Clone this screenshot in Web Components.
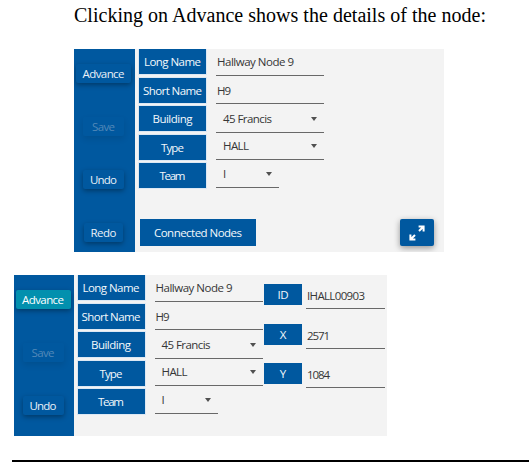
<!DOCTYPE html>
<html lang="en">
<head>
<meta charset="utf-8">
<title>Node details</title>
<style>
html,body{margin:0;background:#fff}
body{width:529px;height:467px;overflow:hidden}
</style>
</head>
<body>
<doc-page></doc-page>
<script>
const define = (name, html, setup) => {
  const t = document.createElement('template');
  t.innerHTML = html;
  customElements.define(name, class extends HTMLElement {
    connectedCallback() {
      if (this.shadowRoot) return;
      this.attachShadow({mode: 'open'}).append(t.content.cloneNode(true));
      if (setup) setup(this, this.shadowRoot);
    }
  });
};

// Text tracked out or in to a given width.
define('fit-text', `<style>:host{display:inline-block;white-space:nowrap}span{display:inline-block}</style><span><slot></slot></span>`, (el, root) => {
  const w = +el.getAttribute('w');
  const s = root.querySelector('span');
  const n = el.textContent.length;
  if (w && n > 1) {
    const ls = (w - s.getBoundingClientRect().width) / (n - 1);
    s.style.letterSpacing = ls + 'px';
    s.style.marginRight = -ls + 'px';
  }
});

define('side-button', `<style>
:host{display:flex;align-items:center;justify-content:center;box-sizing:border-box;width:var(--w,41px);height:19px;border-radius:2px;background:#00589f;color:#e9f1f8;box-shadow:0 2px 5px rgba(0,0,0,.34)}
:host([active]){background:#0290ae;color:#fff}
:host([off]){background:none;color:#5288b8;box-shadow:0 3px 6px rgba(0,0,0,.1)}
</style><slot></slot>`);

define('field-label', `<style>
:host{display:flex;align-items:center;justify-content:center;box-sizing:border-box;background:#00589f;color:#f4f8fc;box-shadow:0 0 0 1px #dce8f4}
</style><slot></slot>`);

define('line-field', `<style>
:host{display:flex;align-items:center;justify-content:space-between;box-sizing:border-box;border-bottom:1px solid #686868;padding:0 7px var(--up,1px) var(--in,1px);color:#363636}
i{display:none;width:0;height:0;border:3.5px solid transparent;border-top:4px solid #505050;border-bottom:0}
:host([menu]) i{display:block}
</style><slot></slot><i></i>`);

define('side-bar', `<style>
:host{display:flex;flex-direction:column;align-items:center;box-sizing:border-box;background:#00589f;padding:15px 3px 0 1px;gap:34px}
</style><slot></slot>`);

define('node-form', `<style>
:host{display:grid;grid-template-columns:67px 108px;column-gap:10px;align-content:start}
field-label{height:25px;margin-bottom:3.5px}
line-field{height:var(--h,27px)}
</style>
<field-label><fit-text w="57">Long Name</fit-text></field-label><line-field><fit-text w="77">Hallway Node 9</fit-text></line-field>
<field-label><fit-text w="59">Short Name</fit-text></field-label><line-field style="--h:26.4px;--up:0px"><fit-text w="14">H9</fit-text></line-field>
<field-label><fit-text w="40">Building</fit-text></field-label><line-field menu style="--in:7px"><fit-text w="49">45 Francis</fit-text></line-field>
<field-label><fit-text w="23">Type</fit-text></field-label><line-field menu style="--in:7px;--h:25.4px;--up:2.4px"><fit-text w="26">HALL</fit-text></line-field>
<field-label><fit-text w="26">Team</fit-text></field-label><line-field menu style="--in:7px;--h:25px;--up:3px;width:63px"><fit-text>I</fit-text></line-field>`);

define('expand-button', `<style>
:host{display:flex;align-items:center;justify-content:center;width:34px;height:27px;background:#00589f;border-radius:2px;box-shadow:0 2px 6px rgba(0,0,0,.4)}
svg{display:block}
</style><svg width="16" height="16" viewBox="0 0 16 16" fill="none" stroke="#fff" stroke-width="2"><path d="M9.6 1.4H14.6V6.4M14.3 1.7L10 6M1.4 9.6V14.6H6.4M1.7 14.3L6 10"/></svg>`);

define('coord-row', `<style>
:host{display:grid;grid-template-columns:38px 79px;column-gap:4px;height:39.5px;align-items:start}
field-label{height:21px;box-shadow:none}
line-field{height:25px;--up:1px}
</style><field-label><slot name="key"></slot></field-label><line-field><slot></slot></line-field>`);

define('doc-page', `<style>
:host{display:flex;flex-direction:column;width:529px;height:467px;font:11.5px/15px "Open Sans","Noto Sans",sans-serif}
h1{margin:0 0 0 74px;padding-top:3px;height:46px;box-sizing:content-box;font:400 20px/25px "Liberation Serif",serif;color:#000}
section{display:flex;background:#f3f3f3;overflow:hidden}
.one{width:370px;height:203px;margin-left:74px;flex:none}
.two{width:373px;height:161px;margin:23px 0 0 14px;flex:none}
.one side-bar{width:61px}
.two side-bar{width:60px}
.main{display:flex;flex-direction:column;flex:1;padding-left:4px}
.main node-form{height:170px}
.actions{display:flex;justify-content:space-between;padding-right:10px;padding-left:1px}
.actions field-label{width:116px;height:27px;box-shadow:none}
.two node-form{margin-left:3.5px}
.coords{margin:9px 0 0 1.5px}
hr{width:517px;height:2px;border:0;background:#000;margin:24px 0 0 12px;flex:none}
</style>
<h1><fit-text w="412">Clicking on Advance shows the details of the node:</fit-text></h1>
<section class="one">
<side-bar><side-button style="--w:55px"><fit-text w="42">Advance</fit-text></side-button><side-button off><fit-text w="23">Save</fit-text></side-button><side-button><fit-text w="27">Undo</fit-text></side-button><side-button style="--w:39px"><fit-text w="26">Redo</fit-text></side-button></side-bar>
<div class="main"><node-form></node-form><div class="actions"><field-label><fit-text w="88">Connected Nodes</fit-text></field-label><expand-button></expand-button></div></div>
</section>
<section class="two">
<side-bar><side-button active style="--w:55px"><fit-text w="42">Advance</fit-text></side-button><side-button off><fit-text w="23">Save</fit-text></side-button><side-button><fit-text w="27">Undo</fit-text></side-button></side-bar>
<node-form></node-form>
<div class="coords">
<coord-row><fit-text slot="key" w="11">ID</fit-text><fit-text w="58">IHALL00903</fit-text></coord-row>
<coord-row><fit-text slot="key">X</fit-text><fit-text w="23">2571</fit-text></coord-row>
<coord-row><fit-text slot="key">Y</fit-text><fit-text w="23">1084</fit-text></coord-row>
</div>
</section>
<hr>`);
</script>
</body>
</html>
